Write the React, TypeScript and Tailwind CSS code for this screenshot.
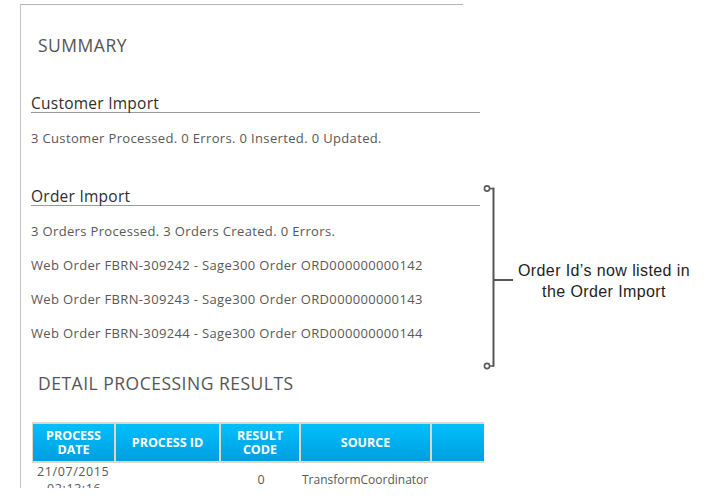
import React from "react";

const orders = [
  { web: "FBRN-309242", sage: "ORD000000000142" },
  { web: "FBRN-309243", sage: "ORD000000000143" },
  { web: "FBRN-309244", sage: "ORD000000000144" },
];

function SectionHeading({ title, className = "" }: { title: string; className?: string }) {
  return (
    <div
      className={`w-[449px] ml-[10px] h-[19px] leading-[18px] text-[15.5px] tracking-[0.25px] text-[#2e2e2e] border-b border-[#9a9a9a] ${className}`}
    >
      {title}
    </div>
  );
}

function BodyLine({ children, className = "" }: { children: React.ReactNode; className?: string }) {
  return (
    <div className={`ml-[10px] h-[16px] leading-[16px] text-[13px] tracking-[0.35px] text-[#585858] whitespace-nowrap ${className}`}>
      {children}
    </div>
  );
}

function HeaderCell({ children, className = "" }: { children?: React.ReactNode; className?: string }) {
  return (
    <div
      className={`h-[37px] flex items-center justify-center text-center text-white font-bold text-[12.5px] leading-[14px] bg-gradient-to-b from-[#00c0fb] to-[#009ee0] ${className}`}
    >
      {children}
    </div>
  );
}

export default function App() {
  return (
    <div
      className="relative w-[709px] h-[488px] overflow-hidden bg-white"
      style={{ fontFamily: '"Open Sans", "Noto Sans", sans-serif' }}
    >
      {/* page card */}
      <div className="ml-[20px] mt-[4px] w-[443px] h-[484px] border-t border-l border-[#b5b5b5] border-l-[#c4c4c4]">
        <div className="mt-[28px] ml-[17px] h-[24px] leading-[24px] text-[17.5px] tracking-[0.5px] text-[#555]">SUMMARY</div>

        <SectionHeading title="Customer Import" className="mt-[37px]" />
        <BodyLine className="mt-[17px]">3 Customer Processed. 0 Errors. 0 Inserted. 0 Updated.</BodyLine>

        <SectionHeading title="Order Import" className="mt-[41px]" />
        <BodyLine className="mt-[17px]">3 Orders Processed. 3 Orders Created. 0 Errors.</BodyLine>
        {orders.map((o) => (
          <BodyLine key={o.web} className="mt-[18px]">
            Web Order {o.web} - Sage300 Order {o.sage}
          </BodyLine>
        ))}

        <div className="mt-[30px] ml-[17px] h-[24px] leading-[24px] text-[17.5px] tracking-[0.5px] text-[#555] whitespace-nowrap">
          DETAIL PROCESSING RESULTS
        </div>

        {/* results table */}
        <div className="mt-[27px] ml-[11px] w-[452px]">
          <div className="flex gap-[2px] bg-[#ddd8c6] pt-[2px] pb-[2px] pl-[1px]">
            <HeaderCell className="w-[81px]">
              PROCESS
              <br />
              DATE
            </HeaderCell>
            <HeaderCell className="w-[103px]">PROCESS ID</HeaderCell>
            <HeaderCell className="w-[78px]">
              RESULT
              <br />
              CODE
            </HeaderCell>
            <HeaderCell className="w-[129px]">SOURCE</HeaderCell>
            <HeaderCell className="flex-1" />
          </div>
          <div className="flex items-center h-[34px] text-[12.5px] text-[#585858]">
            <div className="w-[84px] pl-[5px] leading-[17px] tracking-[0.6px]">
              21/07/2015
              <br />
              <span className="pl-[10px]">02:13:16</span>
            </div>
            <div className="w-[105px]" />
            <div className="w-[80px] text-center">0</div>
            <div className="pl-[1px] text-[12px] whitespace-nowrap">TransformCoordinator</div>
          </div>
        </div>
      </div>

      {/* annotation bracket */}
      <svg className="absolute left-[480px] top-[180px]" width="40" height="195" viewBox="0 0 40 195">
        <circle cx="7" cy="8.5" r="2.6" fill="none" stroke="#5a5a5a" strokeWidth="1.6" />
        <line x1="9.5" y1="8.5" x2="14" y2="8.5" stroke="#5a5a5a" strokeWidth="1.6" />
        <line x1="13.5" y1="7.7" x2="13.5" y2="186.5" stroke="#555" strokeWidth="2" />
        <circle cx="7" cy="186" r="2.6" fill="none" stroke="#5a5a5a" strokeWidth="1.6" />
        <line x1="9.5" y1="186" x2="14" y2="186" stroke="#5a5a5a" strokeWidth="1.6" />
        <line x1="13.5" y1="100" x2="33" y2="100" stroke="#555" strokeWidth="2" />
      </svg>
      <div
        className="absolute left-[506px] top-[260px] w-[196px] text-center text-[16px] leading-[21px] tracking-[0.4px] text-[#1e1e1e]"
        style={{ fontFamily: '"Liberation Sans", sans-serif' }}
      >
        Order Id’s now listed in
        <br />
        the Order Import
      </div>
    </div>
  );
}
